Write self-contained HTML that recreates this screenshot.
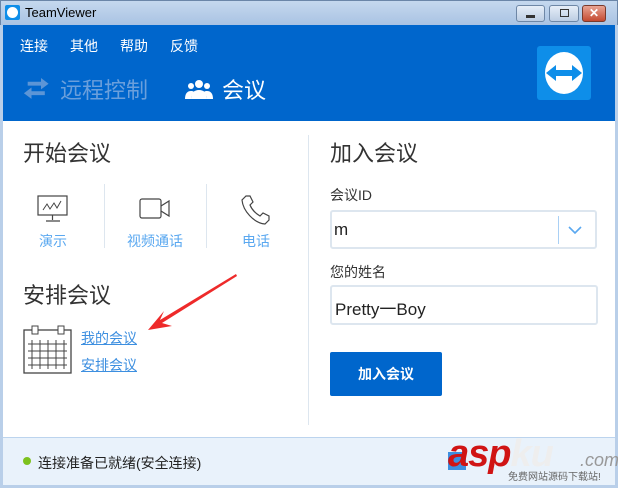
<!DOCTYPE html>
<html><head><meta charset="utf-8"><style>
*{margin:0;padding:0;box-sizing:border-box}
body{width:618px;height:488px;overflow:hidden;font-family:"Liberation Sans","Noto Sans CJK SC",sans-serif;background:#fff;position:relative}
.abs{position:absolute}
.tb{left:0;top:0;width:618px;height:25px;background:linear-gradient(#c5d8ee,#a9c3e3);border:1px solid #6b86a8;border-bottom:none}
.hdr{left:0;top:25px;width:618px;height:96px;background:#0066cc;border-left:3px solid #b9cfe9;border-right:3px solid #b9cfe9}
.menu{top:36px;color:#fff;font-size:14px}
.frame{left:0;top:121px;width:3px;height:367px;background:#b9cfe9}
.frameR{left:615px;top:121px;width:3px;height:367px;background:#b9cfe9}
.status{left:3px;top:437px;width:612px;height:48px;background:#e9f2fb;border-top:1px solid #bcd4ee}
.bottom{left:0;top:485px;width:618px;height:3px;background:#b9cfe9}
.h{font-size:22px;color:#333}
.lbl{font-size:14px;color:#5aa8f0;text-align:center}
.lk{font-size:14px;color:#3d8fe0;text-decoration:underline}
.inp{border:2px solid #dde6ef;border-radius:3px;background:#fff}
.wb{top:5px;height:17px;border:1px solid #6e87a6;border-radius:3px;background:linear-gradient(#e6eef8,#bccde3)}
</style></head><body>
<div class="abs tb"></div>
<div class="abs" style="left:5px;top:5px;width:15px;height:15px;background:#0e8ee9;border-radius:2px"><div style="margin:2px;width:11px;height:11px;background:#fff;border-radius:50%"></div></div>
<div class="abs" style="left:25px;top:5px;font-size:13px;color:#000">TeamViewer</div>
<div class="abs wb" style="left:516px;width:29px"><div style="margin:9px auto 0;width:9px;height:3px;background:#333"></div></div>
<div class="abs wb" style="left:549px;width:30px"><div style="margin:3px auto 0;width:9px;height:8px;border:1.5px solid #333"></div></div>
<div class="abs" style="left:582px;top:5px;width:24px;height:17px;border:1px solid #7a3a2c;border-radius:3px;background:linear-gradient(#e8a493,#c44a31);color:#fff;font-size:12px;font-weight:bold;text-align:center;line-height:15px">✕</div>
<div class="abs hdr"></div>
<div class="abs menu" style="left:20px">连接</div>
<div class="abs menu" style="left:70px">其他</div>
<div class="abs menu" style="left:120px">帮助</div>
<div class="abs menu" style="left:170px">反馈</div>
<svg class="abs" style="left:22px;top:78px" width="30" height="22" viewBox="0 0 30 22"><path d="M6 4h14V0l8 6-8 6V8H6z M24 14H10v-4l-8 6 8 6v-4h14z" fill="#5c95d6" transform="scale(.95)"/></svg>
<div class="abs" style="left:60px;top:73px;font-size:22px;color:#6a9fdc">远程控制</div>
<svg class="abs" style="left:185px;top:79px" width="28" height="20" viewBox="0 0 28 20"><circle cx="14" cy="5" r="4" fill="#fff"/><path d="M6 20c0-6 3-9 8-9s8 3 8 9z" fill="#fff"/><circle cx="6" cy="7" r="3" fill="#fff"/><path d="M0 20c0-5 2-8 6-8 1 0 2 0 3 1-2 2-3 4-3 7z" fill="#fff"/><circle cx="22" cy="7" r="3" fill="#fff"/><path d="M28 20c0-5-2-8-6-8-1 0-2 0-3 1 2 2 3 4 3 7z" fill="#fff"/></svg>
<div class="abs" style="left:222px;top:73px;font-size:22px;color:#fff">会议</div>
<div class="abs" style="left:537px;top:46px;width:54px;height:54px;background:#0e8ee9;border-radius:3px"></div>
<svg class="abs" style="left:537px;top:46px" width="54" height="54" viewBox="0 0 54 54"><ellipse cx="27" cy="27" rx="19" ry="21" fill="#fff"/><path d="M9 27l10-8v5h16v-5l10 8-10 8v-5H19v5z" fill="#0e8ee9"/></svg>
<div class="abs frame"></div><div class="abs frameR"></div>
<div class="abs h" style="left:23px;top:136px">开始会议</div>
<svg class="abs" style="left:37px;top:195px" width="32" height="28" viewBox="0 0 32 28"><rect x="1" y="1" width="29" height="19" fill="none" stroke="#444" stroke-width="1.2"/><path d="M6 15l4-6 3 5 4-6 3 5 4-7" fill="none" stroke="#444"/><path d="M15.5 20v5M9 26h14" stroke="#444" stroke-width="1.2"/></svg>
<div class="abs" style="left:104px;top:184px;width:1px;height:64px;background:#dde6ef"></div>
<div class="abs" style="left:206px;top:184px;width:1px;height:64px;background:#dde6ef"></div>
<svg class="abs" style="left:139px;top:198px" width="32" height="22" viewBox="0 0 32 22"><rect x="1" y="1" width="21" height="19" rx="2" fill="none" stroke="#444" stroke-width="1.2"/><path d="M22 8l8-5v15l-8-5" fill="none" stroke="#444" stroke-width="1.2"/></svg>
<svg class="abs" style="left:240px;top:194px" width="32" height="32" viewBox="0 0 32 32"><path d="M6 2l4 0 3 6-3 3c2 5 5 8 10 11l3-3 6 3v4l-4 4C14 29 3 17 2 6z" fill="none" stroke="#444" stroke-width="1.2"/></svg>
<div class="abs lbl" style="left:30px;top:231px;width:46px">演示</div>
<div class="abs lbl" style="left:115px;top:231px;width:80px">视频通话</div>
<div class="abs lbl" style="left:233px;top:231px;width:46px">电话</div>
<div class="abs h" style="left:23px;top:278px">安排会议</div>
<svg class="abs" style="left:23px;top:324px" width="50" height="50" viewBox="0 0 50 50"><rect x="1" y="6" width="47" height="43" fill="none" stroke="#444" stroke-width="1.3"/><rect x="9" y="2" width="6" height="8" fill="#fff" stroke="#444"/><rect x="35" y="2" width="6" height="8" fill="#fff" stroke="#444"/><path d="M5 20h39M5 27h39M5 34h39M5 41h39M9 16v29M17 16v29M25 16v29M33 16v29M41 16v29" stroke="#444" stroke-width="1"/></svg>
<div class="abs lk" style="left:81px;top:328px">我的会议</div>
<div class="abs lk" style="left:81px;top:355px">安排会议</div>
<svg class="abs" style="left:140px;top:270px" width="100" height="65" viewBox="0 0 100 65"><path d="M96 4L20 50 24 41 8 60 32 56 22 53 97 6z" fill="#ee2a2a"/></svg>
<div class="abs" style="left:308px;top:135px;width:1px;height:290px;background:#dde6ef"></div>
<div class="abs h" style="left:330px;top:136px">加入会议</div>
<div class="abs" style="left:330px;top:185px;font-size:14px;color:#333">会议ID</div>
<div class="abs inp" style="left:330px;top:210px;width:267px;height:39px"></div>
<div class="abs" style="left:334px;top:220px;font-size:17px;color:#222">m</div>
<div class="abs" style="left:558px;top:216px;width:1px;height:28px;background:#a9d0f5"></div>
<svg class="abs" style="left:567px;top:225px" width="16" height="10" viewBox="0 0 16 10"><path d="M2 2l6 6 6-6" fill="none" stroke="#5aa8f0" stroke-width="1.6"/></svg>
<div class="abs" style="left:330px;top:262px;font-size:14px;color:#333">您的姓名</div>
<div class="abs inp" style="left:330px;top:285px;width:268px;height:40px"></div>
<div class="abs" style="left:335px;top:295px;font-size:17px;color:#222">Pretty一Boy</div>
<div class="abs" style="left:330px;top:352px;width:112px;height:44px;background:#0066cc;border-radius:2px;color:#fff;font-size:14px;font-weight:bold;text-align:center;line-height:44px">加入会议</div>
<div class="abs status"></div>
<div class="abs" style="left:23px;top:457px;width:8px;height:8px;border-radius:50%;background:#7dc21e"></div>
<div class="abs" style="left:38px;top:453px;font-size:14px;color:#222">连接准备已就绪(安全连接)</div>
<div class="abs" style="left:448px;top:452px;width:18px;height:18px;border:1px solid #3d8fe0;background:#3d8fe0"></div>
<div class="abs" style="left:448px;top:433px;font-size:38px;font-weight:bold;font-style:italic;color:#d01414;letter-spacing:-1px">asp<span style="color:#eee">ku</span></div>
<div class="abs" style="left:580px;top:450px;font-size:18px;color:#999;font-style:italic">.com</div>
<div class="abs" style="left:508px;top:468px;font-size:10px;color:#666">免费网站源码下载站!</div>
<div class="abs bottom"></div>
</body></html>
